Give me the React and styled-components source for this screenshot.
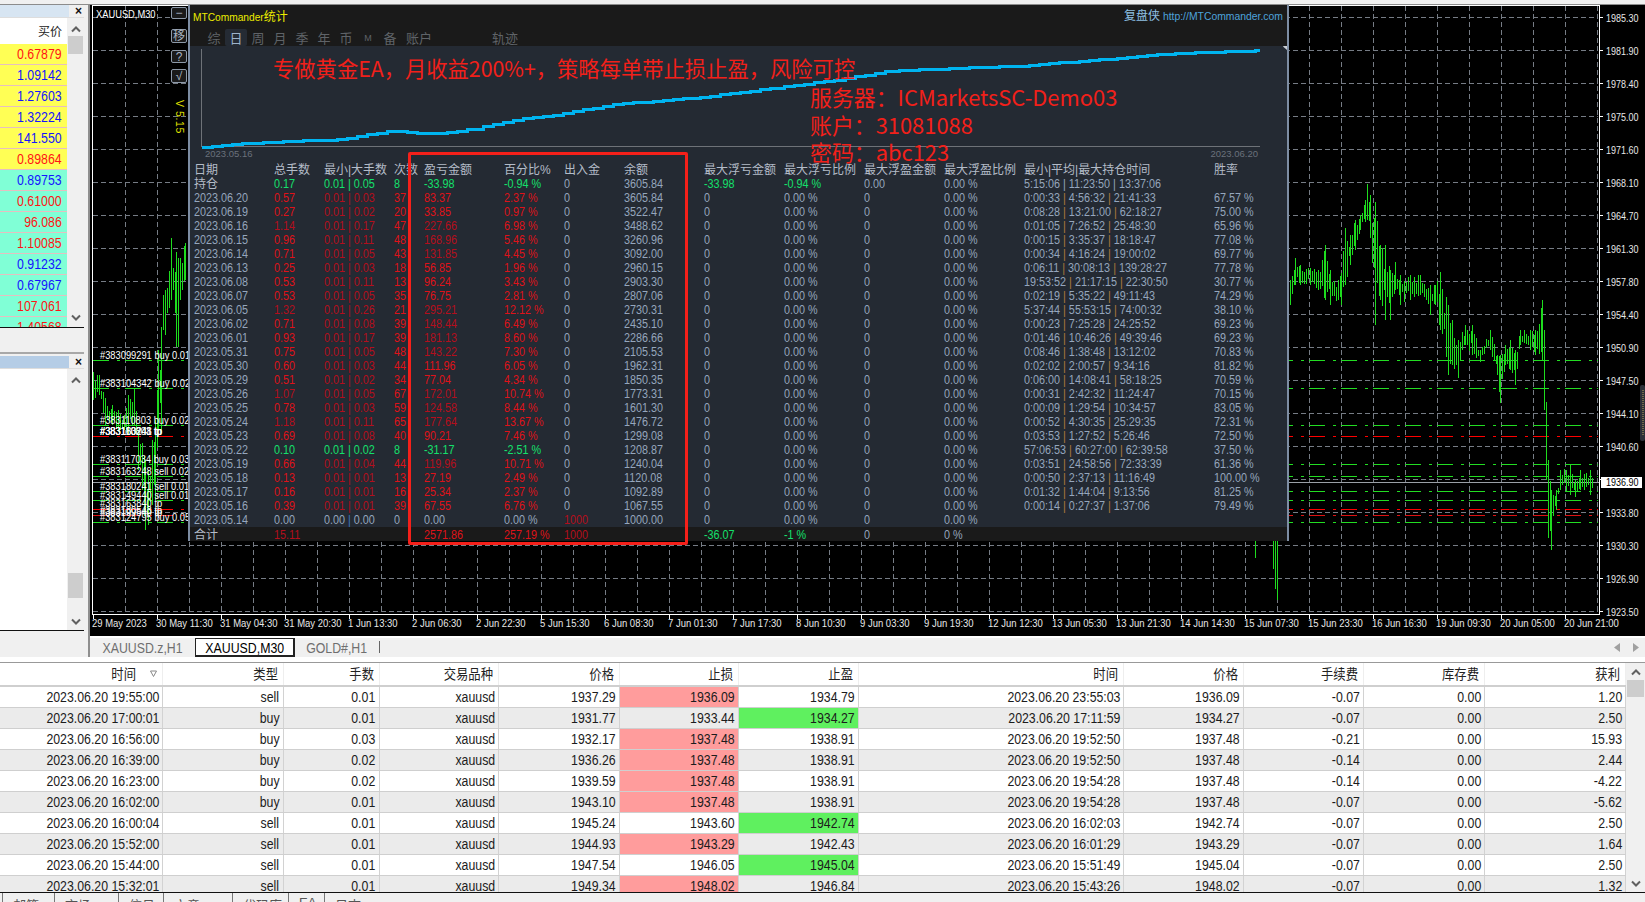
import React from "react";
import styled, { createGlobalStyle } from "styled-components";

const GlobalStyle = createGlobalStyle`
  html, body {
    margin: 0;
    padding: 0;
    width: 100%;
    height: 100%;
    overflow: hidden;
    background: #f0f0f0;
    font-family: "Liberation Sans", "Noto Sans CJK SC", sans-serif;
  }
  * { box-sizing: border-box; }
`;

/* ---------- data ---------- */

const quotes = [
  ["0.67879", "red", "yellow"],
  ["1.09142", "blue", "yellow"],
  ["1.27603", "blue", "yellow"],
  ["1.32224", "blue", "yellow"],
  ["141.550", "blue", "yellow"],
  ["0.89864", "red", "yellow"],
  ["0.89753", "blue", "aqua"],
  ["0.61000", "red", "aqua"],
  ["96.086", "red", "aqua"],
  ["1.10085", "red", "aqua"],
  ["0.91232", "blue", "aqua"],
  ["0.67967", "blue", "aqua"],
  ["107.061", "red", "aqua"],
  ["1.40568", "red", "aqua"],
];

const stats = [
  ["2023.06.20", "0.57", "0.03", "37", "83.37", "2.37", "3605.84", "0:00:33", "4:56:32", "21:41:33", "67.57 %"],
  ["2023.06.19", "0.27", "0.02", "20", "33.85", "0.97", "3522.47", "0:08:28", "13:21:00", "62:18:27", "75.00 %"],
  ["2023.06.16", "1.14", "0.17", "47", "227.66", "6.98", "3488.62", "0:01:05", "7:26:52", "25:48:30", "65.96 %"],
  ["2023.06.15", "0.96", "0.11", "48", "168.96", "5.46", "3260.96", "0:00:15", "3:35:37", "18:18:47", "77.08 %"],
  ["2023.06.14", "0.71", "0.05", "43", "131.85", "4.45", "3092.00", "0:00:34", "4:16:24", "19:00:02", "69.77 %"],
  ["2023.06.13", "0.25", "0.03", "18", "56.85", "1.96", "2960.15", "0:06:11", "30:08:13", "139:28:27", "77.78 %"],
  ["2023.06.08", "0.53", "0.11", "13", "96.24", "3.43", "2903.30", "19:53:52", "21:17:15", "22:30:50", "30.77 %"],
  ["2023.06.07", "0.53", "0.05", "35", "76.75", "2.81", "2807.06", "0:02:19", "5:35:22", "49:11:43", "74.29 %"],
  ["2023.06.05", "1.32", "0.26", "21", "295.21", "12.12", "2730.31", "5:37:44", "55:53:15", "74:00:32", "38.10 %"],
  ["2023.06.02", "0.71", "0.08", "39", "148.44", "6.49", "2435.10", "0:00:23", "7:25:28", "24:25:52", "69.23 %"],
  ["2023.06.01", "0.93", "0.17", "39", "181.13", "8.60", "2286.66", "0:01:46", "10:46:26", "49:39:46", "69.23 %"],
  ["2023.05.31", "0.75", "0.05", "48", "143.22", "7.30", "2105.53", "0:08:46", "1:38:48", "13:12:02", "70.83 %"],
  ["2023.05.30", "0.60", "0.03", "44", "111.96", "6.05", "1962.31", "0:02:02", "2:00:57", "9:34:16", "81.82 %"],
  ["2023.05.29", "0.51", "0.02", "34", "77.04", "4.34", "1850.35", "0:06:00", "14:08:41", "58:18:25", "70.59 %"],
  ["2023.05.26", "1.07", "0.05", "67", "172.01", "10.74", "1773.31", "0:00:31", "2:42:32", "11:24:47", "70.15 %"],
  ["2023.05.25", "0.78", "0.03", "59", "124.58", "8.44", "1601.30", "0:00:09", "1:29:54", "10:34:57", "83.05 %"],
  ["2023.05.24", "1.18", "0.11", "65", "177.64", "13.67", "1476.72", "0:00:52", "4:30:35", "25:29:35", "72.31 %"],
  ["2023.05.23", "0.69", "0.08", "40", "90.21", "7.46", "1299.08", "0:03:53", "1:27:52", "5:26:46", "72.50 %"],
  ["2023.05.22", "0.10", "0.02", "8", "-31.17", "-2.51", "1208.87", "57:06:53", "60:27:00", "62:39:58", "37.50 %"],
  ["2023.05.19", "0.66", "0.04", "44", "119.96", "10.71", "1240.04", "0:03:51", "24:58:56", "72:33:39", "61.36 %"],
  ["2023.05.18", "0.13", "0.01", "13", "27.19", "2.49", "1120.08", "0:00:50", "2:37:13", "11:16:49", "100.00 %"],
  ["2023.05.17", "0.16", "0.01", "16", "25.34", "2.37", "1092.89", "0:01:32", "1:44:04", "9:13:56", "81.25 %"],
  ["2023.05.16", "0.39", "0.01", "39", "67.55", "6.76", "1067.55", "0:00:14", "0:27:37", "1:37:06", "79.49 %"],
];

const orders = [
  ["2023.06.20 19:55:00", "sell", "0.01", "1937.29", "1936.09", "1934.79", "2023.06.20 23:55:03", "1936.09", "-0.07", "1.20", "sl"],
  ["2023.06.20 17:00:01", "buy", "0.01", "1931.77", "1933.44", "1934.27", "2023.06.20 17:11:59", "1934.27", "-0.07", "2.50", "tp"],
  ["2023.06.20 16:56:00", "buy", "0.03", "1932.17", "1937.48", "1938.91", "2023.06.20 19:52:50", "1937.48", "-0.21", "15.93", "sl"],
  ["2023.06.20 16:39:00", "buy", "0.02", "1936.26", "1937.48", "1938.91", "2023.06.20 19:52:50", "1937.48", "-0.14", "2.44", "sl"],
  ["2023.06.20 16:23:00", "buy", "0.02", "1939.59", "1937.48", "1938.91", "2023.06.20 19:54:28", "1937.48", "-0.14", "-4.22", "sl"],
  ["2023.06.20 16:02:00", "buy", "0.01", "1943.10", "1937.48", "1938.91", "2023.06.20 19:54:28", "1937.48", "-0.07", "-5.62", "sl"],
  ["2023.06.20 16:00:04", "sell", "0.01", "1945.24", "1943.60", "1942.74", "2023.06.20 16:02:03", "1942.74", "-0.07", "2.50", "tp"],
  ["2023.06.20 15:52:00", "sell", "0.01", "1944.93", "1943.29", "1942.43", "2023.06.20 16:01:29", "1943.29", "-0.07", "1.64", "sl"],
  ["2023.06.20 15:44:00", "sell", "0.01", "1947.54", "1946.05", "1945.04", "2023.06.20 15:51:49", "1945.04", "-0.07", "2.50", "tp"],
  ["2023.06.20 15:32:01", "sell", "0.01", "1949.34", "1948.02", "1946.84", "2023.06.20 15:43:26", "1948.02", "-0.07", "1.32", "sl"],
];

const tableHeads = ["时间", "类型", "手数", "交易品种", "价格", "止损", "止盈", "时间", "价格", "手续费", "库存费", "获利"];

const prices = ["1985.30", "1981.90", "1978.40", "1975.00", "1971.60", "1968.10", "1964.70", "1961.30", "1957.80", "1954.40", "1950.90", "1947.50", "1944.10", "1940.60", null, "1933.80", "1930.30", "1926.90", "1923.50"];

const times = ["29 May 2023", "30 May 11:30", "31 May 04:30", "31 May 20:30", "1 Jun 13:30", "2 Jun 06:30", "2 Jun 22:30", "5 Jun 15:30", "6 Jun 08:30", "7 Jun 01:30", "7 Jun 17:30", "8 Jun 10:30", "9 Jun 03:30", "9 Jun 19:30", "12 Jun 12:30", "13 Jun 05:30", "13 Jun 21:30", "14 Jun 14:30", "15 Jun 07:30", "15 Jun 23:30", "16 Jun 16:30", "19 Jun 09:30", "20 Jun 05:00", "20 Jun 21:00"];

const levels = [
  [360, "#22dd22"], [388, "#22dd22"], [425, "#22dd22"], [436, "#ff0000"], [464, "#22dd22"], [476, "#22dd22"],
  [491, "#22dd22"], [500, "#22dd22"], [509, "#ff0000"], [515, "#dd1111"], [522, "#22dd22"],
];

const orderTags = [
  ["#383099291 buy 0.01", 359], ["#383104342 buy 0.02", 387], ["#383110803 buy 0.02", 424],
  ["#383110803 tp", 435], ["#383180241 tp", 435], ["#383163248 tp", 435], ["#383117034 buy 0.03", 463],
  ["#383163248 sell 0.02", 475], ["#383180241 sell 0.01", 490], ["#383149440 sell 0.01", 499],
  ["#383163840 tp", 507], ["#383180543 tp", 514], ["#383199540 tp", 516], ["#383124795 buy 0.05", 521],
];

// [x, top, bottom] outlines of the price bars, filled in at 2px pitch
const barOutlines = [
  [[93, 372, 400], [99, 375, 395], [105, 398, 425], [112, 405, 425], [118, 410, 432], [124, 415, 430], [128, 395, 435], [134, 388, 425], [138, 430, 470], [142, 443, 490], [145, 460, 530], [148, 470, 525], [152, 440, 505], [155, 420, 500], [158, 350, 430], [161, 327, 433], [163, 295, 330], [165, 290, 335], [171, 238, 300], [176, 252, 347], [178, 258, 347], [180, 258, 300], [185, 243, 280], [187, 227, 250]],
  [[1290, 280, 305], [1295, 258, 285], [1300, 265, 285], [1310, 268, 285], [1318, 270, 290], [1325, 245, 300], [1330, 270, 305], [1338, 280, 300], [1341, 273, 305], [1345, 228, 285], [1350, 235, 265], [1355, 220, 250], [1360, 215, 230], [1365, 200, 222], [1367, 184, 220], [1370, 195, 238], [1375, 202, 325], [1380, 245, 300], [1385, 245, 320], [1390, 270, 320], [1395, 262, 290], [1400, 275, 305], [1410, 275, 300], [1420, 275, 295], [1430, 285, 315], [1435, 285, 305], [1440, 272, 330], [1448, 305, 375], [1452, 320, 365], [1458, 340, 378], [1465, 325, 345], [1472, 325, 355], [1480, 350, 362], [1490, 330, 350], [1497, 355, 375], [1500, 355, 403], [1505, 345, 365], [1510, 340, 370], [1515, 350, 385], [1520, 330, 345], [1530, 330, 350], [1535, 330, 355], [1542, 300, 360], [1544, 330, 410], [1546, 402, 480], [1548, 460, 538], [1551, 490, 550], [1553, 495, 516], [1556, 490, 510], [1560, 470, 490], [1570, 465, 495], [1575, 480, 497], [1580, 470, 490], [1590, 470, 495], [1594, 478, 497]],
];

const jitter = (x) => {
  const v = Math.sin(x * 12.9898) * 43758.5453;
  return v - Math.floor(v);
};

const buildBars = () => {
  let d = "";
  barOutlines.forEach((pts) => {
    for (let i = 0; i < pts.length - 1; i++) {
      const [x0, t0, b0] = pts[i];
      const [x1, t1, b1] = pts[i + 1];
      for (let x = x0; x < x1; x += 2) {
        const k = (x - x0) / (x1 - x0);
        const top = t0 + (t1 - t0) * k;
        const bot = b0 + (b1 - b0) * k;
        const span = bot - top;
        // only the outline points keep their full length
        const a = k ? jitter(x) * span * 0.4 : 0;
        const b = k ? jitter(x + 7) * span * 0.4 : 0;
        d += `M${x + 0.5} ${Math.round(top + a)}V${Math.round(bot - b)}`;
      }
    }
  });
  // long wicks that stick out under the statistics panel
  d += "M1255.5 540V558M1273.5 540V569M1275.5 540V589M1277.5 540V600";
  return d;
};

const curveKeys = [
  [202, 146.5], [243, 143], [283, 141], [327, 139.5], [347, 137.5], [387, 131], [397, 131], [420, 133], [437, 133], [473, 128.5], [513, 119.5], [553, 114.5], [613, 104], [700, 97], [774, 87.5], [835, 79.5], [889, 70.5], [1019, 65.5], [1107, 58.5], [1165, 53.5], [1260, 50],
];

const buildCurve = () => {
  const out = [];
  for (let i = 0; i < curveKeys.length - 1; i++) {
    const [x0, y0] = curveKeys[i];
    const [x1, y1] = curveKeys[i + 1];
    for (let x = x0; x < x1; x += 10) {
      const y = Math.round(y0 + ((y1 - y0) * (x - x0)) / (x1 - x0));
      out.push(`${x},${y}`, `${Math.min(x + 10, x1)},${y}`);
    }
  }
  return out.join(" ");
};

/* ---------- page frame ---------- */

const Page = styled.div`
  width: 1645px;
  height: 902px;
  display: flex;
  flex-direction: column;
  overflow: hidden;
  background: #f0f0f0;
`;

const TopStrip = styled.div`
  height: 5px;
  flex: none;
  background: #f0f0f0;
  border-bottom: 1px solid #8c8c8c;
`;

const Workspace = styled.div`
  display: flex;
  height: 652px;
  flex: none;
`;

// the terminal's font is narrow: taller glyphs drawn at a reduced width
const Squeeze = styled.span`
  display: inline-block;
  transform: scaleX(${(p) => p.$k || 0.88});
  transform-origin: ${(p) => p.$origin || "right"} center;
`;

/* ---------- left side panels ---------- */

const Sidebar = styled.div`
  width: 90px;
  flex: none;
  display: flex;
  flex-direction: column;
  border-right: 2px solid #8e8e8e;
  padding-right: 4px;
`;

const DockPanel = styled.div`
  height: ${(p) => p.$height}px;
  flex: none;
  display: flex;
  flex-direction: column;
  background: #fff;
  border-bottom: 1px solid #111;
  overflow: hidden;
`;

const DockTitle = styled.div`
  height: 13px;
  flex: none;
  display: flex;
  align-items: center;
  justify-content: flex-end;
  padding-right: 2px;
  background: #f0f0f0;
  font-size: 12px;
  font-weight: 700;
  color: #111;
  border-bottom: 1px solid #ddd;
`;

const DockStrip = styled.div`
  flex: 1;
  height: 100%;
  margin-right: 6px;
  background: ${(p) => p.$bg};
`;

const DockBody = styled.div`
  flex: 1;
  display: flex;
  min-height: 0;
`;

const QuoteColumn = styled.div`
  flex: 1;
  min-width: 0;
`;

const QuoteHead = styled.div`
  height: 26px;
  padding: 4px 5px 0 0;
  text-align: right;
  font-size: 12px;
  color: #222;
  background: #fff;
`;

const QuoteRow = styled.div`
  height: 21px;
  padding-right: 5px;
  line-height: 20px;
  text-align: right;
  font-size: 14px;
  color: ${(p) => (p.$tone === "red" ? "#ff1414" : "#1414ff")};
  background: ${(p) => (p.$bg === "yellow" ? "#ffff55" : "#80ffd6")};
  border-bottom: 1px solid #e6bfc0;
`;

const ScrollTrack = styled.div`
  width: ${(p) => p.$width || 17}px;
  flex: none;
  position: relative;
  background: #f0f0f0;
`;

const ScrollThumb = styled.div`
  position: absolute;
  left: 1px;
  right: 1px;
  top: ${(p) => p.$top}px;
  height: ${(p) => p.$height}px;
  background: #cdcdcd;
`;

const Chevron = styled.svg`
  position: absolute;
  left: 50%;
  margin-left: -5px;
  width: 10px;
  height: 7px;
  ${(p) => (p.$bottom !== undefined ? `bottom: ${p.$bottom}px;` : `top: ${p.$top}px;`)}
`;

const ChevronIcon = ({ down, ...rest }) => (
  <Chevron viewBox="0 0 10 7" {...rest}>
    <path d={down ? "M1 1.5 L5 5.5 L9 1.5" : "M1 5.5 L5 1.5 L9 5.5"} fill="none" stroke="#606060" strokeWidth="2" />
  </Chevron>
);

const DockGap = styled.div`
  height: 26px;
  flex: none;
  border-bottom: 2px solid #a8a8a8;
`;

const DockSpacer = styled.div`
  height: 2px;
  flex: none;
`;

/* ---------- chart ---------- */

const MainColumn = styled.div`
  flex: 1;
  min-width: 0;
  display: flex;
  flex-direction: column;
`;

const ChartPane = styled.div`
  position: relative;
  height: 631px;
  flex: none;
  background: #000;
  overflow: hidden;
`;

const ChartSvg = styled.svg`
  display: block;
  font-family: "Liberation Sans", sans-serif;
`;

const ChartLabel = ({ x, y, size = 10.6, fill = "#e8e8e8", children }) => (
  <text transform={`translate(${x} ${y}) scale(0.88 1)`} fill={fill} fontSize={size}>{children}</text>
);

const PriceChart = () => (
  <ChartSvg width="1555" height="631" viewBox="90 5 1555 631">
    {Array.from({ length: 47 }, (_, i) => (
      <line key={i} x1={125.5 + i * 32} x2={125.5 + i * 32} y1="6" y2="613" stroke="#767c85" strokeDasharray="5 3" shapeRendering="crispEdges" />
    ))}
    {prices.map((_, i) => (
      <line key={i} x1="93" x2="1598" y1={17.5 + i * 33} y2={17.5 + i * 33} stroke="#767c85" strokeDasharray="5 3" shapeRendering="crispEdges" />
    ))}
    {levels.map(([y, c]) => (
      <line key={y} x1="93" x2="1598" y1={y + 0.5} y2={y + 0.5} stroke={c} strokeDasharray="16 8 3 5" shapeRendering="crispEdges" />
    ))}
    <line x1="93" x2="1599" y1="482.5" y2="482.5" stroke="#9a9fa6" shapeRendering="crispEdges" />
    <path d={buildBars()} stroke="#1edc1e" fill="none" shapeRendering="crispEdges" />

    <rect x="92.5" y="5.5" width="1506.5" height="608.5" fill="none" stroke="#fff" shapeRendering="crispEdges" />
    {orderTags.map(([t, y], i) => (
      <ChartLabel key={i} x={100} y={y} fill="#fff">{t}</ChartLabel>
    ))}
    <ChartLabel x={96} y={18} fill="#fff">XAUUSD,M30</ChartLabel>

    {prices.map((p, i) => (
      <g key={i}>
        <line x1="1599" x2="1603" y1={17.5 + i * 33} y2={17.5 + i * 33} stroke="#fff" shapeRendering="crispEdges" />
        {p && <ChartLabel x={1606} y={21.5 + i * 33} size={10.2}>{p}</ChartLabel>}
      </g>
    ))}
    <rect x="1601" y="477" width="41" height="11" fill="#fff" />
    <ChartLabel x={1606} y={486} size={10.2} fill="#000">1936.90</ChartLabel>

    {times.map((t, i) => (
      <g key={i}>
        <line x1={93.5 + i * 64} x2={93.5 + i * 64} y1="614" y2="619" stroke="#fff" shapeRendering="crispEdges" />
        <ChartLabel x={92 + i * 64} y={627} size={10.8}>{t}</ChartLabel>
      </g>
    ))}
    <rect x="1640" y="385" width="5" height="56" rx="2" fill="#2c3038" />
    <line x1="1643" x2="1643" y1="390" y2="436" stroke="#b8a860" strokeDasharray="1 1" />
  </ChartSvg>
);

const SideButtons = styled.div`
  position: absolute;
  left: 81px;
  top: 2px;
  display: flex;
  flex-direction: column;
`;

const SideButton = styled.div`
  width: 16px;
  height: ${(p) => p.$h}px;
  margin-bottom: ${(p) => p.$gap}px;
  display: flex;
  align-items: center;
  justify-content: center;
  border: 1px solid #8d99a8;
  border-radius: 2px;
  background: #1a1a1a;
  color: #a9b4c2;
  font-size: 12px;
  line-height: 1;
`;

const VersionTag = styled.div`
  position: absolute;
  left: 84px;
  top: 95px;
  writing-mode: vertical-rl;
  color: #e6e600;
  font-size: 10.5px;
  letter-spacing: 0.6px;
`;

/* ---------- statistics panel ---------- */

const StatPanel = styled.div`
  position: absolute;
  left: 98px;
  top: 0;
  width: 1101px;
  height: 536px;
  display: flex;
  flex-direction: column;
  background: #242a33;
  border: solid #7d8da3;
  border-width: 0 2px 1px 2px;
`;

const StatHeader = styled.div`
  height: 41px;
  flex: none;
  display: flex;
  flex-direction: column;
  background: #1a1a1a;
`;

const TitleRow = styled.div`
  height: 20px;
  display: flex;
  align-items: center;
  justify-content: space-between;
  padding: 0 4px 0 3px;
`;

const StatTitle = styled.span`
  color: #ecec00;
  font-size: 12px;
`;

const TitleLatin = styled.span`
  font-size: 10.2px;
`;

const SiteLink = styled.span`
  color: #4ea3dc;
  font-size: 10.4px;
`;

const SiteName = styled.span`
  color: #8fc1e4;
  font-size: 12px;
  margin-right: 3px;
`;

const ModeTabs = styled.div`
  display: flex;
  margin-top: 4px;
  padding-left: 13px;
`;

const ModeTab = styled.span`
  height: 17px;
  width: ${(p) => p.$w || 22}px;
  margin-right: ${(p) => p.$after || 0}px;
  flex: none;
  display: flex;
  align-items: center;
  justify-content: center;
  border-radius: 2px;
  font-size: ${(p) => p.$size || 13}px;
  color: ${(p) => (p.$on ? "#9db2c9" : "#5f6368")};
  background: ${(p) => (p.$on ? "#252b34" : "transparent")};
`;

const GraphArea = styled.div`
  position: relative;
  height: 117px;
  flex: none;
`;

const GraphSvg = styled.svg`
  position: absolute;
  left: 0;
  top: 0;
  font-family: "Liberation Sans", sans-serif;
`;

const EquityGraph = () => (
  <GraphSvg width="1097" height="117" viewBox="190 46 1097 117">
    <path d="M201.5 49V146.5H1260" fill="none" stroke="#6e7278" shapeRendering="crispEdges" />
    <polyline points={buildCurve()} fill="none" stroke="#00b4f0" strokeWidth="3" shapeRendering="crispEdges" />
    <text x="205" y="157" fill="#6a717c" fontSize="9.5">2023.05.16</text>
    <text x="1258" y="157" fill="#6a717c" fontSize="9.5" textAnchor="end">2023.06.20</text>
    <path d="M1287 43L1283 46.5L1287 50Z" fill="#c8ccd2" />
  </GraphSvg>
);

const StatGrid = "80px 50px 70px 30px 80px 60px 60px 80px 80px 80px 80px 80px 190px 1fr";

const StatRow = styled.div`
  height: 14px;
  flex: none;
  display: grid;
  grid-template-columns: ${StatGrid};
  padding-left: 4px;
  line-height: ${(p) => (p.$foot ? 17 : 15)}px;
  white-space: nowrap;
  color: #95a6bd;
  background: ${(p) => (p.$foot ? "#1a1a1a" : "transparent")};
`;

const toneColors = {
  red: "#df1219",
  dark: "#b40e1c",
  green: "#14e06c",
  head: "#b4bcc8",
  muted: "#95a6bd",
};

const StatCell = styled.span`
  color: ${(p) => toneColors[p.$tone || "muted"]};
  font-size: 12px;
  min-width: 0;
  ${(p) => (p.$cjk ? "" : "transform: scaleX(0.9); transform-origin: left center;")}
`;

const Bar = styled.span`
  color: ${(p) => p.$color || "inherit"};
`;

const lotTone = (v) => (parseFloat(v) >= 1 ? "dark" : "red");
const pnlTone = (v) => (parseFloat(v) < 0 ? "green" : parseFloat(v) >= 115 ? "dark" : "red");

const StatBody = () => (
  <>
    <StatRow>
      {["日期", "总手数", "最小|大手数", "次数", "盈亏金额", "百分比%", "出入金", "余额", "最大浮亏金额", "最大浮亏比例", "最大浮盈金额", "最大浮盈比例", "最小|平均|最大持仓时间", "胜率"].map((h) => (
        <StatCell key={h} $tone="head" $cjk>{h}</StatCell>
      ))}
    </StatRow>
    <StatRow>
      <StatCell $tone="head" $cjk>持仓</StatCell>
      <StatCell $tone="green">0.17</StatCell>
      <StatCell $tone="green">0.01 | 0.05</StatCell>
      <StatCell $tone="green">8</StatCell>
      <StatCell $tone="green">-33.98</StatCell>
      <StatCell $tone="green">-0.94 %</StatCell>
      <StatCell>0</StatCell>
      <StatCell>3605.84</StatCell>
      <StatCell $tone="green">-33.98</StatCell>
      <StatCell $tone="green">-0.94 %</StatCell>
      <StatCell>0.00</StatCell>
      <StatCell>0.00 %</StatCell>
      <StatCell>5:15:06 | 11:23:50 | 13:37:06</StatCell>
      <StatCell />
    </StatRow>
    {stats.map(([date, lots, max, count, pnl, pct, balance, t1, t2, t3, win]) => {
      const loss = parseFloat(pnl) < 0;
      return (
        <StatRow key={date}>
          <StatCell>{date}</StatCell>
          <StatCell $tone={loss ? "green" : lotTone(lots)}>{lots}</StatCell>
          <StatCell $tone={loss ? "green" : "dark"}>0.01 | {max}</StatCell>
          <StatCell $tone={loss ? "green" : "red"}>{count}</StatCell>
          <StatCell $tone={pnlTone(pnl)}>{pnl}</StatCell>
          <StatCell $tone={loss ? "green" : "red"}>{pct} %</StatCell>
          <StatCell>0</StatCell>
          <StatCell>{balance}</StatCell>
          <StatCell>0</StatCell>
          <StatCell>0.00 %</StatCell>
          <StatCell>0</StatCell>
          <StatCell>0.00 %</StatCell>
          <StatCell>
            {t1} <Bar $color="#b07a3c">|</Bar> {t2} <Bar $color="#b07a3c">|</Bar> {t3}
          </StatCell>
          <StatCell>{win}</StatCell>
        </StatRow>
      );
    })}
    <StatRow>
      <StatCell>2023.05.14</StatCell>
      <StatCell>0.00</StatCell>
      <StatCell>0.00 <Bar $color="#3f78c0">|</Bar> 0.00</StatCell>
      <StatCell>0</StatCell>
      <StatCell>0.00</StatCell>
      <StatCell>0.00 %</StatCell>
      <StatCell $tone="dark">1000</StatCell>
      <StatCell>1000.00</StatCell>
      <StatCell>0</StatCell>
      <StatCell>0.00 %</StatCell>
      <StatCell>0</StatCell>
      <StatCell>0.00 %</StatCell>
    </StatRow>
    <StatRow $foot>
      <StatCell $tone="head" $cjk>合计</StatCell>
      <StatCell $tone="dark">15.11</StatCell>
      <StatCell />
      <StatCell />
      <StatCell $tone="red">2571.86</StatCell>
      <StatCell $tone="red">257.19 %</StatCell>
      <StatCell $tone="dark">1000</StatCell>
      <StatCell />
      <StatCell $tone="green">-36.07</StatCell>
      <StatCell $tone="green">-1 %</StatCell>
      <StatCell>0</StatCell>
      <StatCell>0 %</StatCell>
    </StatRow>
  </>
);

/* ---------- red annotations lying over the chart ---------- */

const RedBox = styled.div`
  position: absolute;
  left: 318px;
  top: 147px;
  width: 280px;
  height: 393px;
  border: 3px solid #f5201a;
  border-radius: 2px;
`;

const Note = styled.div`
  position: absolute;
  left: ${(p) => p.$x}px;
  top: ${(p) => p.$y}px;
  color: #f2201a;
  font-family: "Noto Sans CJK SC", sans-serif;
  font-size: ${(p) => p.$size}px;
  line-height: 30px;
  white-space: nowrap;
`;

/* ---------- chart tabs ---------- */

const ChartTabs = styled.div`
  height: 21px;
  flex: none;
  display: flex;
  align-items: stretch;
  position: relative;
  border-top: 2px solid #fff;
  background: #f0f0f0;
  font-size: 14px;
`;

const ChartTab = styled.div`
  display: flex;
  align-items: center;
  justify-content: center;
  padding-top: 1px;
  width: ${(p) => p.$w}px;
  flex: none;
  white-space: nowrap;
  color: ${(p) => (p.$on ? "#000" : "#6f6f6f")};
  background: ${(p) => (p.$on ? "#fff" : "transparent")};
  border: ${(p) => (p.$on ? "solid #222" : "none")};
  border-width: 1px 2px 2px 1px;
`;

const TabEdge = styled.span`
  width: 1px;
  margin: 3px 0 4px 0;
  background: #666;
`;

const TabArrows = styled.div`
  position: absolute;
  right: 6px;
  top: 5px;
  display: flex;
  gap: 13px;
`;

const TabArrow = styled.svg`
  width: 6px;
  height: 9px;
  fill: #a0a0a0;
`;

/* ---------- orders table ---------- */

const OrdersHeadLine = styled.div`
  height: 5px;
  flex: none;
  background: #fff;
`;

const Orders = styled.div`
  height: 231px;
  flex: none;
  display: flex;
  background: #fff;
  border-top: 1px solid #999;
  border-bottom: 1px solid #111;
  overflow: hidden;
`;

const OrdersColumn = styled.div`
  flex: 1;
  min-width: 0;
`;

const OrderGrid = "163px 120.5px 96px 119.5px 121px 119px 120px 265px 120px 120px 121px 141px";

const HeadRow = styled.div`
  height: 24px;
  display: grid;
  grid-template-columns: ${OrderGrid};
  background: #fff;
  border-bottom: 2px solid #cfcfcf;
  font-size: 14px;
  color: #222;
`;

const HeadCell = styled.div`
  position: relative;
  display: flex;
  align-items: center;
  justify-content: flex-end;
  padding: 0 ${(p) => p.$pad || 5}px 2px 0;
  border-right: 1px solid #eee;
`;

const SortMark = styled.svg`
  position: absolute;
  right: 5px;
  width: 7px;
  height: 7px;
`;

const BodyRow = styled.div`
  height: 21px;
  display: grid;
  grid-template-columns: ${OrderGrid};
  background: ${(p) => (p.$alt ? "#ebebeb" : "#fff")};
  border-bottom: 1px solid #cfcfcf;
`;

const BodyCell = styled.div`
  height: 20px;
  padding-right: 3px;
  line-height: 20px;
  text-align: right;
  font-size: 14px;
  color: #1c1c1c;
  white-space: nowrap;
  border-right: 1px solid #d2d2d2;
  background-clip: padding-box;
  background-color: ${(p) => (p.$mark === "sl" ? "#ff9c9c" : p.$mark === "tp" ? "#5ff05f" : "transparent")};
`;

/* ---------- bottom tabs, cut off by the window edge ---------- */

const BottomTabs = styled.div`
  flex: 1;
  min-height: 0;
  display: flex;
  overflow: hidden;
  padding-left: 2px;
  font-size: 13px;
  color: #555;
`;

const BottomTab = styled.div`
  width: ${(p) => p.$w}px;
  height: 20px;
  flex: none;
  padding: 2px 0 0 10px;
  border-left: 1px solid #777;
  white-space: nowrap;
`;

const bottomTabs = [["邮箱", 52], ["市场", 64], ["信号", 45], ["文章", 69], ["代码库", 56], ["EA", 36], ["日志", 43]];

const Order = ({ o, alt }) => {
  const cells = [o[0], o[1], o[2], "xauusd", o[3], o[4], o[5], o[6], o[7], o[8], "0.00", o[9]];
  return (
    <BodyRow $alt={alt}>
      {cells.map((c, i) => (
        <BodyCell key={i} $mark={(i === 5 && o[10] === "sl") ? "sl" : (i === 6 && o[10] === "tp") ? "tp" : undefined}>
          <Squeeze>{c}</Squeeze>
        </BodyCell>
      ))}
    </BodyRow>
  );
};

export default function App() {
  return (
    <Page>
      <GlobalStyle />
      <TopStrip />
      <Workspace>
        <Sidebar>
          <DockPanel $height={323}>
            <DockTitle>
              <DockStrip $bg="#d7e5f2" />×
            </DockTitle>
            <DockBody>
              <QuoteColumn>
                <QuoteHead>买价</QuoteHead>
                {quotes.map(([v, tone, bg]) => (
                  <QuoteRow key={v} $tone={tone} $bg={bg}><Squeeze>{v}</Squeeze></QuoteRow>
                ))}
              </QuoteColumn>
              <ScrollTrack>
                <ChevronIcon $top={8} />
                <ScrollThumb $top={18} $height={18} />
                <ChevronIcon down $bottom={6} />
              </ScrollTrack>
            </DockBody>
          </DockPanel>
          <DockGap />
          <DockSpacer />
          <DockPanel $height={275}>
            <DockTitle>
              <DockStrip $bg="#b5cde6" />×
            </DockTitle>
            <DockBody>
              <QuoteColumn />
              <ScrollTrack>
                <ChevronIcon $top={8} />
                <ScrollThumb $top={204} $height={25} />
                <ChevronIcon down $bottom={5} />
              </ScrollTrack>
            </DockBody>
          </DockPanel>
        </Sidebar>

        <MainColumn>
          <ChartPane>
            <PriceChart />
            <SideButtons>
              <SideButton $h={12} $gap={10}>−</SideButton>
              <SideButton $h={14} $gap={7}>移</SideButton>
              <SideButton $h={13} $gap={6}>?</SideButton>
              <SideButton $h={14} $gap={0}>√</SideButton>
            </SideButtons>
            <VersionTag>V 5.15</VersionTag>
            <StatPanel>
              <StatHeader>
                <TitleRow>
                  <StatTitle><TitleLatin>MTCommander</TitleLatin>统计</StatTitle>
                  <span>
                    <SiteName>复盘侠</SiteName>
                    <SiteLink>http://MTCommander.com</SiteLink>
                  </span>
                </TitleRow>
                <ModeTabs>
                  <ModeTab>综</ModeTab>
                  <ModeTab $on>日</ModeTab>
                  <ModeTab>周</ModeTab>
                  <ModeTab>月</ModeTab>
                  <ModeTab>季</ModeTab>
                  <ModeTab>年</ModeTab>
                  <ModeTab>币</ModeTab>
                  <ModeTab $size={9}>M</ModeTab>
                  <ModeTab>备</ModeTab>
                  <ModeTab $w={36} $after={50}>账户</ModeTab>
                  <ModeTab $w={36}>轨迹</ModeTab>
                </ModeTabs>
              </StatHeader>
              <GraphArea>
                <EquityGraph />
              </GraphArea>
              <StatBody />
            </StatPanel>
            <RedBox />
            <Note $x={183} $y={48} $size={21.3}>专做黄金EA，月收益200%+，策略每单带止损止盈，风险可控</Note>
            <Note $x={720} $y={77} $size={21.9}>服务器：ICMarketsSC-Demo03</Note>
            <Note $x={720} $y={105} $size={21.9}>账户：31081088</Note>
            <Note $x={720} $y={132} $size={21.9}>密码：abc123</Note>
          </ChartPane>
          <ChartTabs>
            <ChartTab $w={105}><Squeeze $origin="center">XAUUSD.z,H1</Squeeze></ChartTab>
            <ChartTab $w={100} $on><Squeeze $origin="center">XAUUSD,M30</Squeeze></ChartTab>
            <ChartTab $w={84}><Squeeze $origin="center">GOLD#,H1</Squeeze></ChartTab>
            <TabEdge />
            <TabArrows>
              <TabArrow viewBox="0 0 6 9"><path d="M6 0V9L0 4.5Z" /></TabArrow>
              <TabArrow viewBox="0 0 6 9"><path d="M0 0V9L6 4.5Z" /></TabArrow>
            </TabArrows>
          </ChartTabs>
        </MainColumn>
      </Workspace>

      <OrdersHeadLine />
      <Orders>
        <OrdersColumn>
          <HeadRow>
            {tableHeads.map((h, i) => (
              <HeadCell key={i} $pad={i === 0 ? 26 : 5}>
                <Squeeze>{h}</Squeeze>
                {i === 0 && (
                  <SortMark viewBox="0 0 7 7">
                    <path d="M0.5 1H6.5L3.5 6.5Z" fill="none" stroke="#888" />
                  </SortMark>
                )}
              </HeadCell>
            ))}
          </HeadRow>
          {orders.map((o, i) => (
            <Order key={i} o={o} alt={i % 2 === 1} />
          ))}
        </OrdersColumn>
        <ScrollTrack $width={19}>
          <ChevronIcon $top={6} />
          <ScrollThumb $top={17} $height={17} />
          <ChevronIcon down $bottom={5} />
        </ScrollTrack>
      </Orders>
      <BottomTabs>
        {bottomTabs.map(([t, w]) => (
          <BottomTab key={t} $w={w}>{t}</BottomTab>
        ))}
      </BottomTabs>
    </Page>
  );
}
